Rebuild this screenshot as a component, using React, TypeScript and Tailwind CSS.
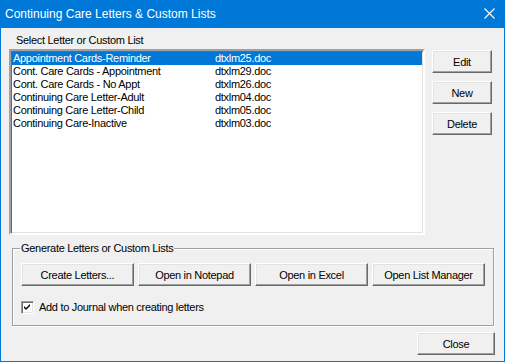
const items = [
  { name: "Appointment Cards-Reminder", file: "dtxlm25.doc" },
  { name: "Cont. Care Cards - Appointment", file: "dtxlm29.doc" },
  { name: "Cont. Care Cards - No Appt", file: "dtxlm26.doc" },
  { name: "Continuing Care Letter-Adult", file: "dtxlm04.doc" },
  { name: "Continuing Care Letter-Child", file: "dtxlm05.doc" },
  { name: "Continuing Care-Inactive", file: "dtxlm03.doc" },
];

function Btn({ label, className }: { label: string; className: string }) {
  return (
    <button className={`flex items-center justify-center h-[23px] pt-[1px] bg-[#f0f0f0] border border-t-white border-l-white border-r-[#696969] border-b-[#696969] shadow-[inset_-1px_-1px_0_#a0a0a0,inset_1px_1px_0_#e3e3e3] text-black text-[11px] leading-[13px] tracking-[-0.3px] ${className}`}>
      {label}
    </button>
  );
}

export default function App() {
  return (
    <div
      className="w-[505px] h-[362px] flex flex-col bg-[#f0f0f0] border border-[#0078d7] text-black text-[11px] leading-[13px] tracking-[-0.3px]"
      style={{ fontFamily: '"Liberation Sans", Arial, sans-serif' }}
    >
      <header className="h-[27px] shrink-0 flex items-center justify-between bg-[#0078d7] text-white pl-[4px] pr-[9px]">
        <div className="text-[12px] leading-[14px] pb-[1px] tracking-normal">Continuing Care Letters &amp; Custom Lists</div>
        <svg width="11" height="11" viewBox="0 0 11 11" className="mb-[2px]">
          <path d="M0.5 0.5 L10.5 10.5 M10.5 0.5 L0.5 10.5" stroke="white" strokeWidth="1.1" />
        </svg>
      </header>

      <main className="flex flex-col pl-[8px]">
        <section className="flex">
          <div className="w-[416px] flex flex-col">
            <div className="h-[21px] pt-[6px] pl-[7px]">Select Letter or Custom List</div>
            <div className="h-[186px] bg-white border-2 border-t-[#a0a0a0] border-l-[#a0a0a0] border-r-white border-b-white shadow-[inset_1px_1px_0_#696969,inset_-1px_-1px_0_#e3e3e3] p-[1px] pt-[1px]">
              {items.map((it, i) => (
                <div
                  key={it.name}
                  className={`flex h-[13px] pl-[1px] ${i === 0 ? "bg-[#0078d7] text-white" : "text-black"}`}
                >
                  <span className="w-[202px] whitespace-nowrap">{it.name}</span>
                  <span>{it.file}</span>
                </div>
              ))}
            </div>
          </div>
          <div className="ml-[7px] pt-[22px] flex flex-col gap-[8px]">
            <Btn label="Edit" className="w-[60px]" />
            <Btn label="New" className="w-[60px]" />
            <Btn label="Delete" className="w-[60px]" />
          </div>
        </section>

        <section className="ml-[3px] mt-[13px] w-[482px] h-[78px] border border-[#a0a0a0] shadow-[inset_1px_1px_0_#fff,1px_1px_0_#fff] flex flex-col pl-[8px]">
          <div className="-mt-[7px] ml-[-1px] self-start bg-[#f0f0f0] px-[1px]">Generate Letters or Custom Lists</div>
          <div className="mt-[8px] flex gap-[4px]">
            <Btn label="Create Letters..." className="w-[113px]" />
            <Btn label="Open in Notepad" className="w-[113px]" />
            <Btn label="Open in Excel" className="w-[113px]" />
            <Btn label="Open List Manager" className="w-[113px]" />
          </div>
          <label className="mt-[15px] flex items-center gap-[5px]">
            <span className="w-[13px] h-[13px] bg-white border border-t-[#a0a0a0] border-l-[#a0a0a0] border-r-white border-b-white shadow-[inset_1px_1px_0_#696969,inset_-1px_-1px_0_#e3e3e3] flex items-center justify-center">
              <svg width="7" height="7" viewBox="0 0 7 7">
                <path d="M0 2 L2 4 L6 0 L6 2 L2 6 L0 4 Z" fill="black" />
              </svg>
            </span>
            <span>Add to Journal when creating letters</span>
          </label>
        </section>

        <div className="flex justify-end pr-[9px] mt-[6px]">
          <Btn label="Close" className="w-[78px]" />
        </div>
      </main>
    </div>
  );
}
